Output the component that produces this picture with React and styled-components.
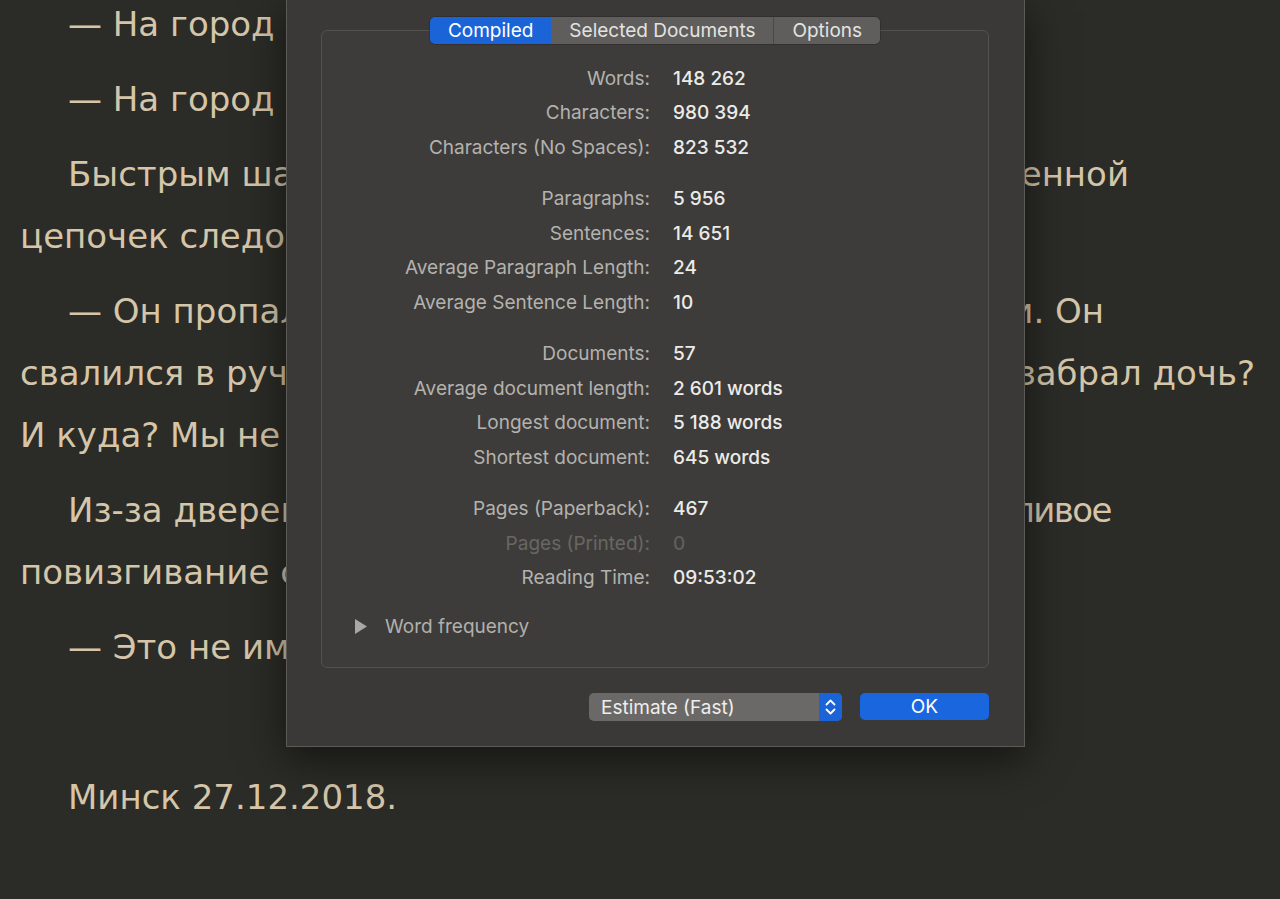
import React from 'react';
import styled, { createGlobalStyle } from 'styled-components';

const Global = createGlobalStyle`
html, body {
margin:0;
padding:0;
background:#2b2b27;
}
body {
width:1280px;
height:899px;
overflow:hidden;
position:relative;
}
`

const Page = styled.div`
padding:0 20px;
margin-top:-7px;
font-family:"DejaVu Sans", Verdana, sans-serif;
font-size:34px;
color:#d5c5a9;
`
const Para = styled.div`
margin-bottom:13px;
min-height:62px;
`
// one visual line of the manuscript; $end = x where its last word stops
const Line = styled.div`
display:flex;
justify-content:space-between;
white-space:nowrap;
line-height:62px;
height:62px;
padding-left:${p => p.$indent ? '48px' : '0'};
width:${p => p.$end ? `${p.$end - 20 - (p.$indent ? 48 : 0)}px` : 'auto'};
`
const Tail = styled.span`
letter-spacing:${p => p.$tight ? '-1.5px' : '0'};
`

const Dialog = styled.div`
position:absolute;
left:286px;
top:-1px;
width:739px;
height:748px;
background:#3a3937;
border:1px solid #5b5a57;
box-shadow:0 12px 40px rgba(0,0,0,0.55);
padding:17px 35px 0 34px;
box-sizing:border-box;
display:flex;
flex-direction:column;
font-family:Inter, "Liberation Sans", sans-serif;
`
const Tabs = styled.div`
align-self:center;
display:flex;
height:27px;
border-radius:5px;
overflow:hidden;
margin-bottom:-14px;
position:relative;
z-index:1;
box-shadow:0 0 0 0.5px rgba(0,0,0,0.35);
`
const Tab = styled.div`
padding:0 18px;
display:flex;
align-items:center;
font-size:19px;
color:${p => p.$active ? '#ffffff' : '#e4e3e0'};
background:${p => p.$active ? '#1b64d8' : '#5f5e5c'};
border-left:${p => p.$divider ? '1px solid #4a4947' : 'none'};
`
const Box = styled.div`
height:638px;
box-sizing:border-box;
border:1px solid #52514d;
border-radius:6px;
background:#3d3c3a;
padding:30.5px 0 0 0;
`
const Stats = styled.div`
display:grid;
grid-template-columns:328px 1fr;
column-gap:23px;
`
const Label = styled.div`
text-align:right;
font-size:19px;
line-height:34.5px;
color:${p => p.$dim ? '#686764' : '#b4b2ae'};
margin-top:${p => p.$gap ? '17px' : '0'};
`
const Value = styled.div`
font-size:19px;
font-weight:500;
line-height:34.5px;
color:${p => p.$dim ? '#5f5e5b' : '#ecebe8'};
margin-top:${p => p.$gap ? '17px' : '0'};
`
const Disclosure = styled.div`
display:flex;
align-items:center;
gap:18px;
margin:14px 0 0 33px;
height:34.5px;
font-size:19px;
color:#b2b0ac;
`
const Footer = styled.div`
display:flex;
justify-content:flex-end;
gap:18px;
margin-top:25px;
`
const Popup = styled.div`
width:253px;
height:28px;
border-radius:5px;
overflow:hidden;
display:flex;
background:#6a6967;
`
const PopupText = styled.div`
flex:1;
padding-left:12px;
display:flex;
align-items:center;
font-size:19px;
color:#efeeeb;
`
const Stepper = styled.div`
width:23px;
background:#1b64d8;
display:flex;
align-items:center;
justify-content:center;
`
const Button = styled.div`
width:129px;
height:27px;
border-radius:5px;
background:#1a66df;
color:#fff;
font-size:19px;
display:flex;
align-items:center;
justify-content:center;
`

const groups = [
  [['Words:', '148 262'], ['Characters:', '980 394'], ['Characters (No Spaces):', '823 532']],
  [['Paragraphs:', '5 956'], ['Sentences:', '14 651'], ['Average Paragraph Length:', '24'], ['Average Sentence Length:', '10']],
  [['Documents:', '57'], ['Average document length:', '2 601 words'], ['Longest document:', '5 188 words'], ['Shortest document:', '645 words']],
  [['Pages (Paperback):', '467'], ['Pages (Printed):', '0', true], ['Reading Time:', '09:53:02']],
]

const App = () => {
  return (
    <>
      <Global />
      <Page>
        <Para><Line $indent>— На город&nbsp;жут.</Line></Para>
        <Para><Line $indent>— На город&nbsp;жара.</Line></Para>
        <Para>
          <Line $indent $end={1129}><span>Быстрым шагом</span><Tail>вдоль заснеженной</Tail></Line>
          <Line>цепочек следов.</Line>
        </Para>
        <Para>
          <Line $indent $end={1104}><span>— Он пропал</span><Tail>за ними. Он</Tail></Line>
          <Line $end={1255}><span>свалился в ручей,</span><Tail>кто же забрал дочь?</Tail></Line>
          <Line>И куда? Мы не знаем.</Line>
        </Para>
        <Para>
          <Line $indent $end={1111}><span>Из-за дверей</span><Tail $tight>тоскливое</Tail></Line>
          <Line>повизгивание собаки.</Line>
        </Para>
        <Para><Line $indent>— Это не имеет.</Line></Para>
        <Para />
        <Para><Line $indent>Минск 27.12.2018.</Line></Para>
      </Page>

      <Dialog>
        <Tabs>
          <Tab $active>Compiled</Tab>
          <Tab>Selected Documents</Tab>
          <Tab $divider>Options</Tab>
        </Tabs>
        <Box>
          <Stats>
            {groups.map((g, gi) => g.map(([label, value, dim], i) => (
              <React.Fragment key={label}>
                <Label $dim={dim} $gap={gi > 0 && i === 0}>{label}</Label>
                <Value $dim={dim} $gap={gi > 0 && i === 0}>{value}</Value>
              </React.Fragment>
            )))}
          </Stats>
          <Disclosure>
            <svg width="12" height="15" viewBox="0 0 12 15"><polygon points="0,0 12,7.5 0,15" fill="#a9a8a4" /></svg>
            <span>Word frequency</span>
          </Disclosure>
        </Box>
        <Footer>
          <Popup>
            <PopupText>Estimate (Fast)</PopupText>
            <Stepper>
              <svg width="11" height="18" viewBox="0 0 11 18" fill="none" stroke="#fff" strokeWidth="1.8" strokeLinecap="round" strokeLinejoin="round">
                <polyline points="1.5,6.5 5.5,2.5 9.5,6.5" />
                <polyline points="1.5,11.5 5.5,15.5 9.5,11.5" />
              </svg>
            </Stepper>
          </Popup>
          <Button>OK</Button>
        </Footer>
      </Dialog>
    </>
  );
}

export default App;
